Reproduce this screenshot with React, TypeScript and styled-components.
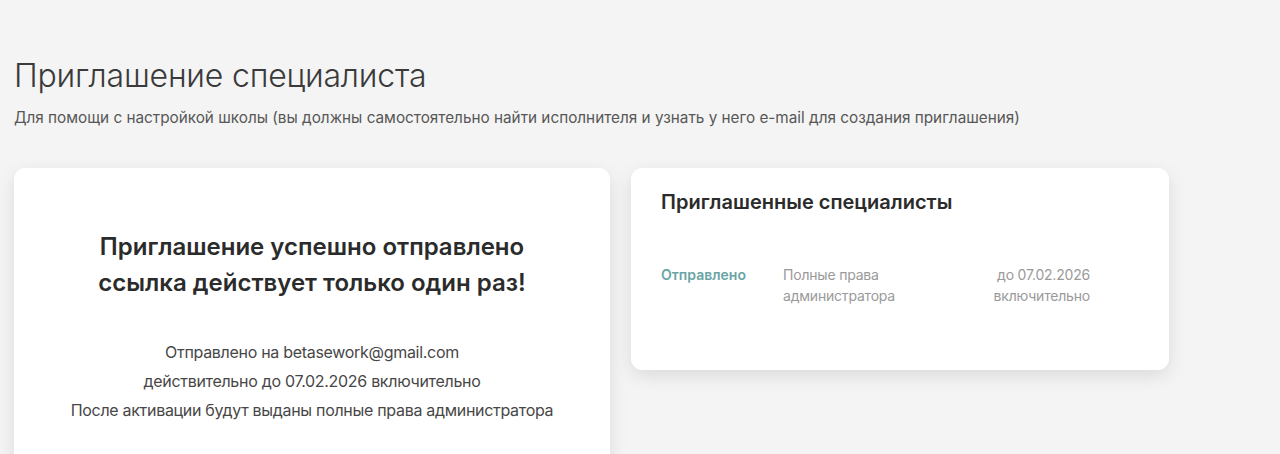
import React from "react";
import styled, { createGlobalStyle } from "styled-components";

const Global = createGlobalStyle`
  html, body { margin: 0; padding: 0; background: #f4f4f4; }
  body { font-family: Inter, "Noto Sans", sans-serif; color: #2b2b2b; }
`;

const Page = styled.div`
  padding: 52px 14px 0 14px;
  height: 454px;
  box-sizing: border-box;
  overflow: hidden;
`;

const Title = styled.h1`
  margin: 0;
  font-size: 32px;
  font-weight: 300;
  line-height: 48px;
  color: #3a3a3a;
  letter-spacing: -0.2px;
`;

const Subtitle = styled.p`
  margin: 8px 0 0 0;
  font-size: 15.3px;
  line-height: 20px;
  color: #575757;
  font-weight: 400;
`;

const Cards = styled.div`
  display: flex;
  align-items: flex-start;
  gap: 21px;
  margin-top: 40px;
`;

const Card = styled.div<{ $w: number; $h?: number }>`
  width: ${(p) => p.$w}px;
  ${(p) => (p.$h ? `height: ${p.$h}px;` : "")}
  background: #fff;
  border-radius: 11px;
  box-shadow: 0 6px 18px rgba(0, 0, 0, 0.10);
  box-sizing: border-box;
`;

const SuccessCard = styled(Card)`
  display: flex;
  flex-direction: column;
  align-items: center;
  padding-top: 61px;
  height: 320px;
`;

const SuccessHeading = styled.h2`
  margin: 0;
  text-align: center;
  font-size: 24px;
  font-weight: 600;
  line-height: 36px;
  color: #2b2b2b;
`;

const Details = styled.div`
  margin-top: 37px;
  text-align: center;
  font-size: 16px;
  line-height: 29px;
  color: #474747;
  letter-spacing: -0.3px;
`;

const ListCard = styled(Card)`
  padding: 20px 30px;
`;

const ListTitle = styled.h3`
  margin: 0;
  font-size: 20px;
  font-weight: 600;
  line-height: 28px;
  color: #2b2b2b;
`;

const Row = styled.div`
  display: grid;
  grid-template-columns: 122px 1fr 140px;
  margin-top: 48px;
  padding-right: 49px;
  font-size: 14px;
  line-height: 21px;
`;

const Status = styled.span`
  color: #6aa5a5;
  font-weight: 600;
`;

const Muted = styled.span<{ $right?: boolean }>`
  color: #9a9a9a;
  text-align: ${(p) => (p.$right ? "right" : "left")};
  letter-spacing: -0.2px;
`;

export default function App() {
  return (
    <>
      <Global />
      <Page>
        <Title>Приглашение специалиста</Title>
        <Subtitle>
          Для помощи с настройкой школы (вы должны самостоятельно найти исполнителя и узнать у него e-mail для создания приглашения)
        </Subtitle>
        <Cards>
          <SuccessCard $w={596}>
            <SuccessHeading>
              Приглашение успешно отправлено
              <br />
              ссылка действует только один раз!
            </SuccessHeading>
            <Details>
              Отправлено на betasework@gmail.com
              <br />
              действительно до 07.02.2026 включительно
              <br />
              После активации будут выданы полные права администратора
            </Details>
          </SuccessCard>
          <ListCard $w={538} $h={202}>
            <ListTitle>Приглашенные специалисты</ListTitle>
            <Row>
              <Status>Отправлено</Status>
              <Muted>
                Полные права
                <br />
                администратора
              </Muted>
              <Muted $right>
                до 07.02.2026
                <br />
                включительно
              </Muted>
            </Row>
          </ListCard>
        </Cards>
      </Page>
    </>
  );
}
